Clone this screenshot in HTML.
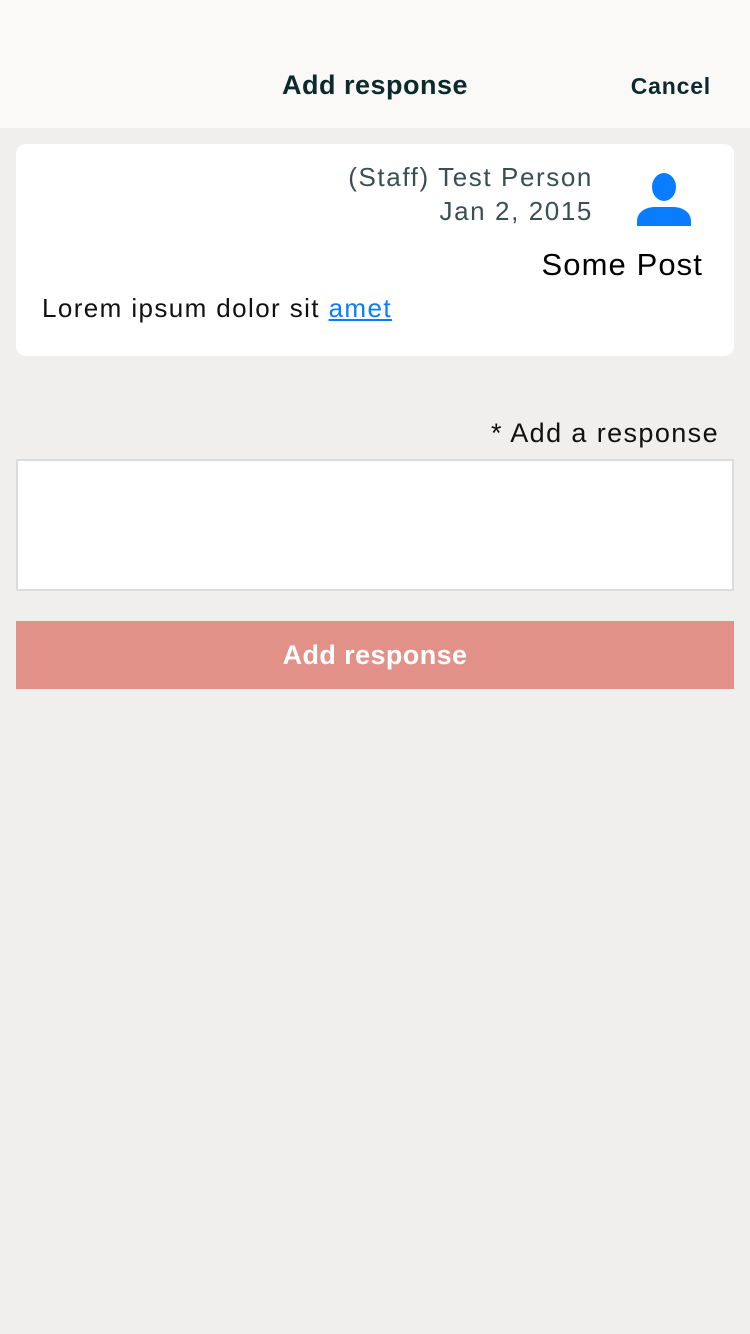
<!DOCTYPE html>
<html><head><meta charset="utf-8"><style>
*{margin:0;padding:0;box-sizing:border-box}
body{width:750px;height:1334px;background:#f0efed;font-family:"Liberation Sans",sans-serif;position:relative;overflow:hidden}
.hdr{position:absolute;left:0;top:0;width:750px;height:128px;background:#faf9f7}
.t{position:absolute;white-space:nowrap}
.card{position:absolute;left:16px;top:144px;width:718px;height:212px;background:#fff;border-radius:10px}
.ta{position:absolute;left:16px;top:459px;width:718px;height:132px;background:#fff;border:2px solid #dcdcdc}
.btn{position:absolute;left:16px;top:621px;width:718px;height:68px;background:#e29189;color:#fff;font-weight:bold;font-size:27px;text-align:center;line-height:68px;letter-spacing:0.4px}
</style></head><body>
<div class="hdr">
<div class="t" style="left:0;width:750px;text-align:center;top:70px;font-size:27px;font-weight:bold;color:#0b2a2d;letter-spacing:0.5px">Add response</div>
<div class="t" style="right:39px;top:73px;font-size:23px;font-weight:bold;color:#0b2a2d;letter-spacing:0.8px">Cancel</div>
</div>
<div class="card">
<div class="t" style="right:141px;top:16px;font-size:26px;color:#3b4f52;text-align:right;line-height:34px;letter-spacing:1.6px">(Staff) Test Person<br>Jan 2, 2015</div>
<svg style="position:absolute;left:621px;top:28px" width="54" height="56" viewBox="0 0 54 56"><ellipse cx="27" cy="15" rx="12" ry="14" fill="#0a7cff"/><path d="M0 54V49C0 40 9 35 18 35H36C45 35 54 40 54 49V54Z" fill="#0a7cff"/></svg>
<div class="t" style="right:31px;top:103px;font-size:31px;color:#000;letter-spacing:1.1px">Some Post</div>
<div class="t" style="left:26px;top:149px;font-size:26px;color:#111;letter-spacing:1.4px">Lorem ipsum dolor sit <span style="color:#0a7cff;text-decoration:underline">amet</span></div>
</div>
<div class="t" style="right:31px;top:418px;font-size:27px;color:#111;letter-spacing:1.4px">* Add a response</div>
<div class="ta"></div>
<div class="btn">Add response</div>
</body></html>
